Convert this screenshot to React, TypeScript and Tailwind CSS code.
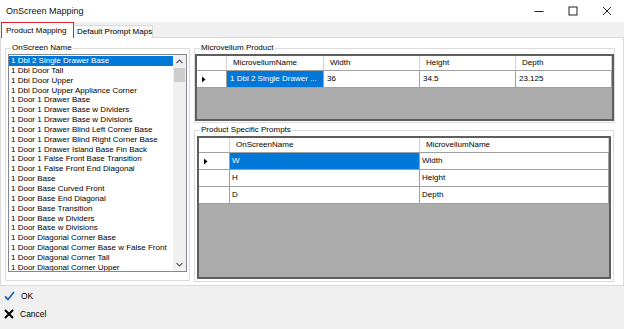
import React from "react";

const items = [
  "1 Dbl 2 Single Drawer Base",
  "1 Dbl Door Tall",
  "1 Dbl Door Upper",
  "1 Dbl Door Upper Appliance Corner",
  "1 Door 1 Drawer Base",
  "1 Door 1 Drawer Base w Dividers",
  "1 Door 1 Drawer Base w Divisions",
  "1 Door 1 Drawer Blind Left Corner Base",
  "1 Door 1 Drawer Blind Right Corner Base",
  "1 Door 1 Drawer Island Base Fin Back",
  "1 Door 1 False Front Base Transition",
  "1 Door 1 False Front End Diagonal",
  "1 Door Base",
  "1 Door Base Curved Front",
  "1 Door Base End Diagonal",
  "1 Door Base Transition",
  "1 Door Base w Dividers",
  "1 Door Base w Divisions",
  "1 Door Diagonal Corner Base",
  "1 Door Diagonal Corner Base w False Front",
  "1 Door Diagonal Corner Tall",
  "1 Door Diagonal Corner Upper",
];

type GridProps = {
  rowHeaderW: number;
  cols: { label: string; w?: number }[];
  rows: string[][];
  selectedCol: number;
  cellPad: number;
  height: number;
};

function Arrow() {
  return (
    <svg width="5" height="7" viewBox="0 0 5 7">
      <path d="M1 0.5 L4.5 3.5 L1 6.5 Z" fill="#000" />
    </svg>
  );
}

function Grid({ rowHeaderW, cols, rows, selectedCol, cellPad, height }: GridProps) {
  return (
    <div
      className="flex flex-col border-2 border-[#5e5e5e] bg-[#ababab] overflow-hidden"
      style={{ height }}
    >
      <div className="flex h-[15px] bg-white border-b border-[#a0a0a0] shrink-0">
        <div
          className="border-r border-[#d0d0d0] shrink-0"
          style={{ width: rowHeaderW - 1 }}
        />
        {cols.map((c, i) => (
          <div
            key={i}
            className={
              "flex items-center pl-[6px] border-r border-[#d0d0d0] whitespace-nowrap " +
              (c.w ? "shrink-0" : "flex-1")
            }
            style={c.w ? { width: c.w } : undefined}
          >
            {c.label}
          </div>
        ))}
      </div>
      {rows.map((r, ri) => (
        <div
          key={ri}
          className="flex h-[17px] bg-white border-b border-[#a0a0a0] shrink-0"
        >
          <div
            className="flex items-center pl-[4px] border-r border-[#a0a0a0] shrink-0"
            style={{ width: rowHeaderW - 1 }}
          >
            {ri === 0 ? <Arrow /> : null}
          </div>
          {r.map((v, ci) => {
            const sel = ri === 0 && ci === selectedCol;
            return (
              <div
                key={ci}
                className={
                  "flex items-center border-r border-[#a0a0a0] whitespace-nowrap overflow-hidden " +
                  (cols[ci].w ? "shrink-0 " : "flex-1 ") +
                  (sel ? "bg-[#0078d7] text-white" : "")
                }
                style={{
                  ...(cols[ci].w ? { width: cols[ci].w } : {}),
                  paddingLeft: cellPad,
                }}
              >
                {v}
              </div>
            );
          })}
        </div>
      ))}
    </div>
  );
}

function Group({
  label,
  className,
  innerClass,
  children,
}: {
  label: string;
  className: string;
  innerClass: string;
  children: React.ReactNode;
}) {
  return (
    <div className={"relative pt-[5px] shrink-0 " + className}>
      <div className={"h-full border border-[#dcdcdc] flex flex-col " + innerClass}>
        {children}
      </div>
      <span className="absolute top-0 left-[6px] bg-white px-[1px] leading-[10px] whitespace-nowrap">
        {label}
      </span>
    </div>
  );
}

export default function App() {
  return (
    <div className="w-[624px] h-[329px] bg-[#f0f0f0] flex flex-col overflow-hidden text-[8px] text-black font-['Liberation_Sans',Arial,sans-serif] leading-[10px]">
      {/* Title bar */}
      <div className="h-[22px] bg-white flex items-center shrink-0">
        <div className="pl-[6px] text-[9px] text-[#111]">OnScreen Mapping</div>
        <div className="ml-auto flex h-full">
          <div className="w-[34px] h-full flex items-center justify-center">
            <svg width="10" height="10" viewBox="0 0 10 10">
              <path d="M0.5 5.5 H9.5" stroke="#222" strokeWidth="1" />
            </svg>
          </div>
          <div className="w-[34px] h-full flex items-center justify-center">
            <svg width="10" height="10" viewBox="0 0 10 10">
              <rect x="1" y="1" width="8" height="8" fill="none" stroke="#222" strokeWidth="1" />
            </svg>
          </div>
          <div className="w-[34px] h-full flex items-center justify-center">
            <svg width="10" height="10" viewBox="0 0 10 10">
              <path d="M1 1 L9 9 M9 1 L1 9" stroke="#222" strokeWidth="1" />
            </svg>
          </div>
        </div>
      </div>

      {/* Tabs */}
      <div className="h-[16px] flex items-end pl-[1px] shrink-0 relative z-10">
        <div className="h-[16px] w-[73px] bg-white border-[1.5px] border-b-0 border-[#e0242c] flex items-center pl-[4px] whitespace-nowrap">
          Product Mapping
        </div>
        <div className="h-[13px] w-[79px] bg-[#f7f7f7] border border-b-0 border-[#d9d9d9] border-l-0 flex items-center pl-[3px] whitespace-nowrap">
          Default Prompt Maps
        </div>
      </div>

      {/* Page */}
      <div className="h-[249px] bg-white border border-[#d9d9d9] -mt-[1px] flex pl-[4px] pt-[5px] gap-[4px] shrink-0">
        {/* Left group */}
        <Group label="OnScreen Name" className="w-[185px] h-[238px]" innerClass="pt-[5px] px-[2px] pb-[8px]">
          <div className="flex-1 border border-[#828790] flex overflow-hidden">
            <div className="flex-1 pt-[1px] overflow-hidden">
              {items.map((t, i) => (
                <div
                  key={i}
                  className={
                    "h-[9.85px] leading-[9.85px] pl-[2px] whitespace-nowrap " +
                    (i === 0 ? "bg-[#0078d7] text-white" : "")
                  }
                >
                  {t}
                </div>
              ))}
            </div>
            <div className="w-[13px] bg-[#f0f0f0] flex flex-col shrink-0">
              <div className="h-[13px] flex items-center justify-center">
                <svg width="7" height="5" viewBox="0 0 7 5">
                  <path d="M0.5 4 L3.5 1 L6.5 4" fill="none" stroke="#606060" strokeWidth="1.2" />
                </svg>
              </div>
              <div className="h-[14px] bg-[#cdcdcd] mx-[1px]" />
              <div className="flex-1" />
              <div className="h-[13px] flex items-center justify-center">
                <svg width="7" height="5" viewBox="0 0 7 5">
                  <path d="M0.5 1 L3.5 4 L6.5 1" fill="none" stroke="#606060" strokeWidth="1.2" />
                </svg>
              </div>
            </div>
          </div>
        </Group>

        {/* Right column */}
        <div className="w-[421px] flex flex-col gap-[2px]">
          <Group label="Microvellum Product" className="w-[421px] h-[80px]" innerClass="pt-[5px] px-[0px] pb-[1px]">
            <Grid
              height={67}
              rowHeaderW={31}
              cols={[
                { label: "MicrovellumName", w: 97 },
                { label: "Width", w: 96 },
                { label: "Height", w: 96 },
                { label: "Depth" },
              ]}
              rows={[["1 Dbl 2 Single Drawer ...", "36", "34.5", "23.125"]]}
              selectedCol={0}
              cellPad={3}
            />
          </Group>
          <Group label="Product Specific Prompts" className="w-[420px] h-[157px]" innerClass="pt-[5px] px-[2px] pb-[2px]">
            <Grid
              height={143}
              rowHeaderW={32}
              cols={[{ label: "OnScreenName", w: 190 }, { label: "MicrovellumName" }]}
              rows={[
                ["W", "Width"],
                ["H", "Height"],
                ["D", "Depth"],
              ]}
              selectedCol={0}
              cellPad={2}
            />
          </Group>
        </div>
      </div>

      {/* Bottom buttons */}
      <div className="flex flex-col pl-[4px] pt-[4px] gap-[6px] text-[8.5px]">
        <div className="flex items-center gap-[6px] h-[12px]">
          <svg width="11" height="10" viewBox="0 0 11 10">
            <path d="M1 5.5 L4 8.5 L10 1" fill="none" stroke="#1e64c0" strokeWidth="1.8" />
          </svg>
          <span>OK</span>
        </div>
        <div className="flex items-center gap-[6px] h-[12px]">
          <svg width="10" height="10" viewBox="0 0 10 10">
            <path d="M1 1 L9 9 M9 1 L1 9" stroke="#000" strokeWidth="2" />
          </svg>
          <span>Cancel</span>
        </div>
      </div>
    </div>
  );
}
